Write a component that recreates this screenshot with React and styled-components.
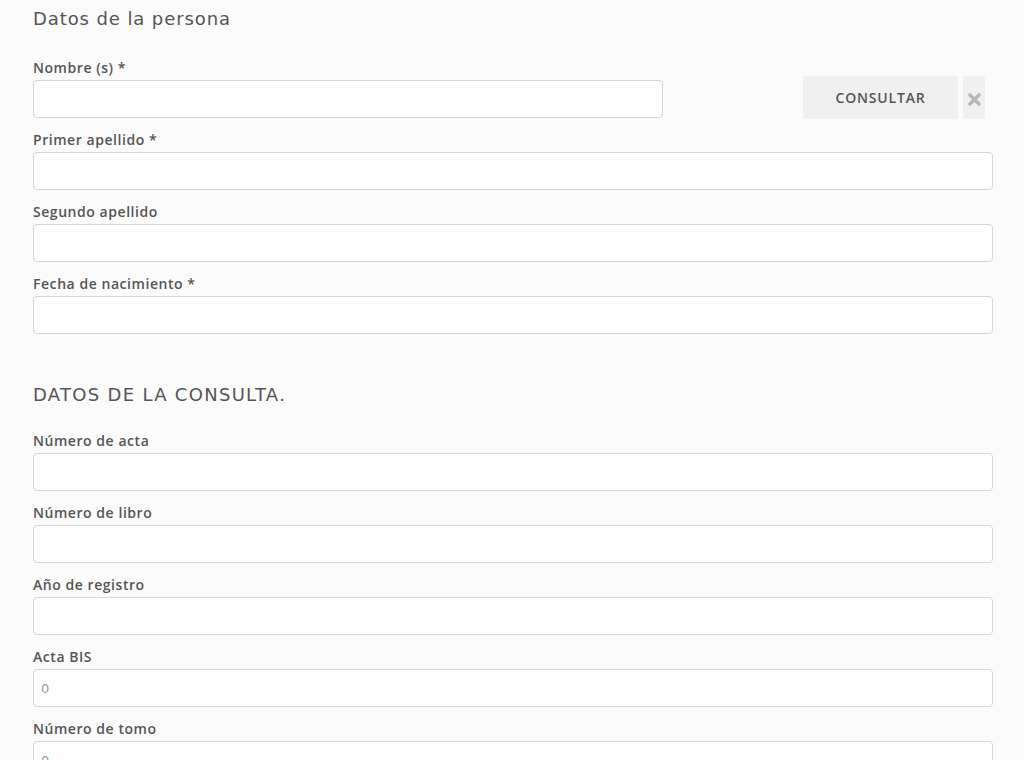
import React from "react";
import styled, { createGlobalStyle } from "styled-components";

const Global = createGlobalStyle`
  html, body { margin: 0; padding: 0; background: #fbfbfb; }
  body { font-family: "DejaVu Sans", "Noto Sans", sans-serif; color: #555; }
`;

const Page = styled.div`
  width: 960px;
  padding: 0 31px 0 33px;
`;

const SectionTitle = styled.h2`
  margin: 0;
  font-family: "DejaVu Sans", sans-serif;
  font-size: 18px;
  font-weight: 400;
  letter-spacing: ${(p) => p.$spacing || 0.9}px;
  color: #555;
  line-height: 22px;
  padding-top: ${(p) => p.$top}px;
  padding-bottom: ${(p) => p.$bottom}px;
`;

const Field = styled.div`
  display: flex;
  flex-direction: column;
  margin-bottom: 14px;
  width: ${(p) => (p.$width ? `${p.$width}px` : "auto")};
`;

const Label = styled.label`
  font-family: "Open Sans", "Noto Sans", sans-serif;
  font-size: 14px;
  font-weight: 600;
  letter-spacing: 0.55px;
  color: #555;
  line-height: 16px;
  margin-bottom: 4px;
`;

const Input = styled.input`
  box-sizing: border-box;
  height: 38px;
  width: 100%;
  border: 1px solid #d6d6d6;
  border-radius: 4px;
  background: #fefefe;
  padding: 0 7px;
  font-family: "DejaVu Sans", sans-serif;
  font-size: 13px;
  color: #999;
  outline: none;
`;

const Row = styled.div`
  display: flex;
  align-items: flex-start;
`;

const ConsultButton = styled.button`
  margin-top: 16px;
  margin-left: 140px;
  width: 155px;
  height: 43px;
  border: none;
  border-radius: 2px;
  background: #f0f0f0;
  color: #555;
  font-family: "Open Sans", "Noto Sans", sans-serif;
  font-size: 14px;
  font-weight: 600;
  letter-spacing: 0.8px;
  cursor: pointer;
`;

const ClearButton = styled.button`
  margin-top: 16px;
  margin-left: 5px;
  width: 22px;
  height: 43px;
  border: none;
  border-radius: 2px;
  background: #f0f0f0;
  padding: 4px 0 0;
  display: flex;
  align-items: center;
  justify-content: center;
  cursor: pointer;
`;

const XIcon = () => (
  <svg width="13" height="13" viewBox="0 0 13 13">
    <path d="M2 2 L11 11 M11 2 L2 11" stroke="#b8b8b8" strokeWidth="3.6" strokeLinecap="round" />
  </svg>
);

export default function App() {
  return (
    <>
      <Global />
      <Page>
        <SectionTitle $top={8} $bottom={30} $spacing={0.9}>Datos de la persona</SectionTitle>
        <Row>
          <Field $width={630}>
            <Label>Nombre (s) *</Label>
            <Input />
          </Field>
          <ConsultButton>CONSULTAR</ConsultButton>
          <ClearButton aria-label="Limpiar"><XIcon /></ClearButton>
        </Row>
        <Field>
          <Label>Primer apellido *</Label>
          <Input />
        </Field>
        <Field>
          <Label>Segundo apellido</Label>
          <Input />
        </Field>
        <Field>
          <Label>Fecha de nacimiento *</Label>
          <Input />
        </Field>
        <SectionTitle $top={36} $bottom={27} $spacing={1.3}>DATOS DE LA CONSULTA.</SectionTitle>
        <Field>
          <Label>Número de acta</Label>
          <Input />
        </Field>
        <Field>
          <Label>Número de libro</Label>
          <Input />
        </Field>
        <Field>
          <Label>Año de registro</Label>
          <Input />
        </Field>
        <Field>
          <Label>Acta BIS</Label>
          <Input defaultValue="0" />
        </Field>
        <Field>
          <Label>Número de tomo</Label>
          <Input defaultValue="0" />
        </Field>
      </Page>
    </>
  );
}
